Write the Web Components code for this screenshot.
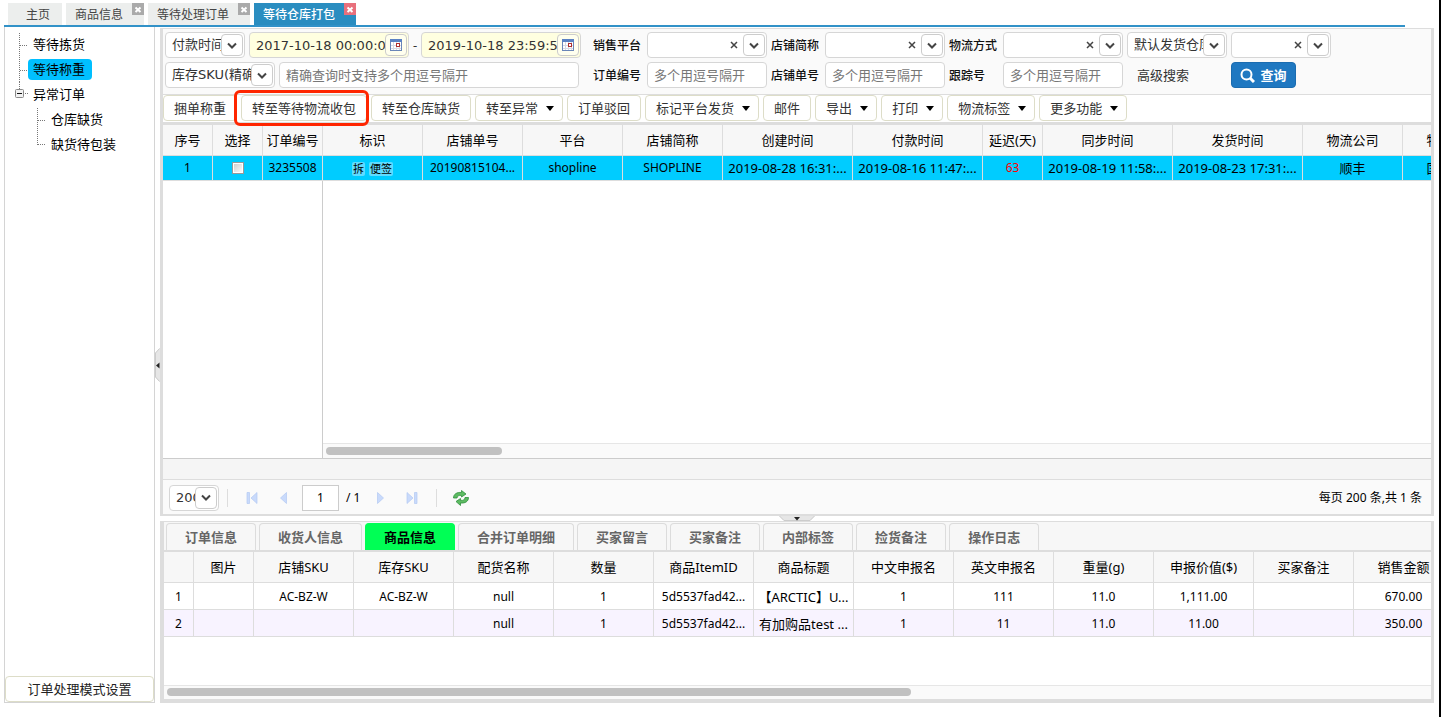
<!DOCTYPE html>
<html lang="zh-CN">
<head>
<meta charset="utf-8">
<title>等待仓库打包</title>
<style>
  html, body { margin: 0; height: 100%; }
  body {
    --line: #dddddd;
    --ui: "DejaVu Sans", "Noto Sans CJK SC", sans-serif;
    font: 13px/20px "Noto Sans", "Noto Sans CJK SC", sans-serif;
    color: #000;
    background: #fff;
  }
</style>
</head>
<body>
<app-shell>
  <tab-bar slot="tabs">
    <tab-item>主页</tab-item>
    <tab-item closable>商品信息</tab-item>
    <tab-item closable>等待处理订单</tab-item>
    <tab-item closable active>等待仓库打包</tab-item>
  </tab-bar>
  <side-tree slot="side"></side-tree>
  <search-form slot="main"></search-form>
  <tool-bar slot="main">
    <tool-button>捆单称重</tool-button>
    <tool-button marked>转至等待物流收包</tool-button>
    <tool-button>转至仓库缺货</tool-button>
    <tool-button menu>转至异常</tool-button>
    <tool-button>订单驳回</tool-button>
    <tool-button menu>标记平台发货</tool-button>
    <tool-button>邮件</tool-button>
    <tool-button menu>导出</tool-button>
    <tool-button menu>打印</tool-button>
    <tool-button menu>物流标签</tool-button>
    <tool-button menu>更多功能</tool-button>
  </tool-bar>
  <order-grid slot="main"></order-grid>
  <page-bar slot="main"></page-bar>
  <detail-panel slot="detail"></detail-panel>
</app-shell>

<script>
const define = (name, css, html) => {
  const tpl = document.createElement('template');
  const base = '*{box-sizing:border-box}button,input,select{font:inherit;color:inherit;margin:0}';
  customElements.define(name, class extends HTMLElement {
    constructor() {
      super();
      const markup = typeof html === 'function' ? html(this) : html;
      tpl.innerHTML = `<style>${base}${css}</style>${markup}`;
      this.attachShadow({ mode: 'open' }).append(tpl.content.cloneNode(true));
    }
  });
};

/* ---- frame ---- */
define('app-shell', `
  :host{display:flex;flex-direction:column;height:100vh;min-height:560px;padding:3px 0 14px 4px;border-right:2px solid #000;box-sizing:border-box;overflow:hidden}
  .body{flex:1;display:flex;min-height:0;padding-right:5px}
  aside{flex:none;width:151px;border:1px solid #d4d4d4;border-top:0;display:flex}
  .vsplit,.hsplit{flex:none;display:flex;align-items:center;justify-content:center}
  .vsplit{width:5px}
  .hsplit{height:5px}
  .split{display:block;border:0;padding:0;background:none;line-height:0}
  main{flex:1;min-width:0;display:flex;flex-direction:column;padding-top:1px}
  .upper{flex:1;min-height:0;display:flex;flex-direction:column;border:3px solid var(--line);border-top-width:1px;border-bottom-width:2px}
  .lower{flex:none;border:3px solid var(--line);border-left-width:4px;border-top-width:1px;border-bottom-width:4px}
`, `
  <slot name="tabs"></slot>
  <div class="body">
    <aside><slot name="side"></slot></aside>
    <div class="vsplit"><button class="split" aria-label="收起左侧"><svg width="5" height="34"><path d="M5 0 0 5v24l5 5z" fill="#e6e6e6"/><path d="M4.500 .5.5 5v24l4 4.500" fill="none" stroke="#ccc"/><path d="M4.500 14.500v6L1 17.500z" fill="#222"/></svg></button></div>
    <main>
      <div class="upper"><slot name="main"></slot></div>
      <div class="hsplit"><button class="split" aria-label="收起下方"><svg width="36" height="5"><path d="M0 0h36l-5 5H5z" fill="#e6e6e6"/><path d="M.5 0 5 4.500h26L35.500 0" fill="none" stroke="#ccc"/><path d="M15 1h6l-3 3.500z" fill="#222"/></svg></button></div>
      <div class="lower"><slot name="detail"></slot></div>
    </main>
  </div>
`);

define('tab-bar', `
  :host{display:flex;gap:4px;height:24px;flex:none;padding-left:4px;margin-right:34px;border-bottom:2px solid #3292c8;box-sizing:border-box}
`, `<slot></slot>`);

define('tab-item', `
  :host{display:flex;height:22px;position:relative;font-size:12px;line-height:24px}
  .t{border:0;padding:0 12px 0 18px;background:#eceeed;color:#444;height:22px;line-height:24px;white-space:nowrap}
  :host([closable]) .t{padding:0 21px 0 9px}
  :host([active]) .t{background:#2a8dc0;color:#fff;font-weight:500}
  .x{display:none;position:absolute;right:0;top:0;width:12px;height:12px;border:0;padding:0;background:#aaa;line-height:0}
  :host([closable]) .x{display:block}
  :host([active]) .x{background:#e8707c}
`, `<button class="t"><slot></slot></button><button class="x" aria-label="关闭"><svg width="12" height="12"><path d="M3.500 4.500 8.500 9M8.500 4.500 3.500 9" stroke="#fff" stroke-width="2"/></svg></button>`);

/* ---- sidebar ---- */
const dots = 'fill="none" stroke="#777" stroke-dasharray="1 1"';
define('side-tree', `
  :host{flex:1;display:flex;flex-direction:column;padding-top:5px}
  ul{list-style:none;margin:0;padding:0;flex:1}
  li{display:flex;height:25px;align-items:center}
  svg{flex:none}
  a{color:#000;text-decoration:none;line-height:21px;padding:0 7px 0 5px;border-radius:4px}
  a[aria-current]{background:#00bfff}
  .set{height:26px;border:1px solid #ddddc8;border-radius:4px;background:#fff;color:#222;line-height:20px;padding:0}
`, `
  <ul>
    <li><svg width="23" height="25"><path d="M14.500 1v24M15 13.500h8" ${dots}/></svg><a href="#">等待拣货</a></li>
    <li><svg width="23" height="25"><path d="M14.500 0v25M15 13.500h8" ${dots}/></svg><a href="#" aria-current="page">等待称重</a></li>
    <li><svg width="23" height="25"><path d="M14.500 0v7M20 11.500h3" ${dots}/><rect x="10.500" y="7.500" width="8" height="8" rx="1" fill="#f2f2f2" stroke="#8a8a8a"/><path d="M12 11.500h5" stroke="#111"/></svg><a href="#">异常订单</a></li>
    <li><svg width="41" height="25"><path d="M32.500 1v24M33 13.500h8" ${dots}/></svg><a href="#">仓库缺货</a></li>
    <li><svg width="41" height="25"><path d="M32.500 0v13M33 12.500h8" ${dots}/></svg><a href="#">缺货待包装</a></li>
  </ul>
  <button class="set">订单处理模式设置</button>
`);

/* ---- search form ---- */
const chevron = `<span class="arrow" aria-hidden="true"><svg width="10" height="7"><path d="M1 1.500 5 5.500 9 1.500" fill="none" stroke="#444" stroke-width="2"/></svg></span>`;
const calendar = `<svg width="12" height="12"><rect x=".5" y=".5" width="11" height="11" fill="#fff" stroke="#6a86b8"/><path d="M0 0h12v3H0z" fill="#5b82c4"/><path d="M1 6.500h10M1 9.500h10M3.500 3v8M6.500 3v8M9.500 3v8" stroke="#d5d9e4"/><rect x="6.500" y="4.500" width="3" height="3" fill="#fff" stroke="#b03030"/></svg>`;
const fieldCss = `
  :host{display:flex;align-items:center;font-family:var(--ui);color:#333}
  label{flex:none;width:54px;font:500 12px/20px "Noto Sans CJK SC",sans-serif;color:#111}
  .box{position:relative;width:var(--w,120px);height:26px;border:1px solid #d6d6d6;border-radius:4px;background:#fff;display:flex}
  select,input{appearance:none;flex:1;min-width:0;width:100%;height:24px;border:0;border-radius:4px;background:transparent;padding:0 6px;outline:0;line-height:20px;text-overflow:clip}
  input::placeholder{color:#777;opacity:1}
  .arrow,.cal{position:absolute;right:1px;top:1px;width:22px;height:22px;border:1px solid #ccc;border-radius:4px;background:#fff;display:flex;align-items:center;justify-content:center;pointer-events:none;padding:0}
  .clear{position:absolute;right:25px;top:2px;width:14px;height:20px;border:0;padding:0;background:none;display:flex;align-items:center;justify-content:center}
  .date{background:#ffffe0}.cal{background:#ffffee;pointer-events:auto}
`;
const labelOf = h => h.getAttribute('label') ? `<label for="c">${h.getAttribute('label')}</label>` : '';
const aria = h => h.getAttribute('name') ? `aria-label="${h.getAttribute('name')}"` : '';

define('combo-field', fieldCss, h => `${labelOf(h)}<div class="box"><select id="c" ${aria(h)}><option>${h.getAttribute('value') || ''}</option></select>${h.hasAttribute('clear') ? '<button class="clear" type="button" aria-label="清除"><svg width="8" height="8"><path d="M1 1l6 6M7 1 1 7" stroke="#444" stroke-width="1.500"/></svg></button>' : ''}${chevron}</div>`);
define('text-field', fieldCss, h => `${labelOf(h)}<div class="box"><input id="c" type="text" ${aria(h)} placeholder="${h.getAttribute('hint') || ''}"></div>`);
define('date-field', fieldCss, h => `<div class="box date"><input type="text" ${aria(h)} value="${h.getAttribute('value')}"><button class="cal" type="button" aria-label="选择日期">${calendar}</button></div>`);

define('search-form', `
  :host{flex:none;display:block;background:#fafafa;padding:3px 2px 6px}
  form{display:flex;flex-direction:column;gap:4px}
  .row{display:flex;gap:4px;height:26px;align-items:center}
  .row>*{flex:none}
  .dash{width:4px;color:#333;line-height:20px}
  .w80{--w:80px}.w100{--w:100px}.w110{--w:110px}.w160{--w:160px}.w300{--w:300px}
  .first{margin-left:8px}.wide{margin-left:10px}
  .adv{width:90px;margin-left:10px;color:#333;text-decoration:none}
  .go{width:65px;height:26px;border:1px solid #1b6cb0;border-radius:4px;background:#1f78c1;color:#fff;font-weight:700;display:flex;align-items:center;justify-content:center;gap:5px;padding:0}
`, `
  <form onsubmit="return false">
    <div class="row">
      <combo-field class="w80" name="时间类型" value="付款时间"></combo-field>
      <date-field class="w160" name="开始时间" value="2017-10-18 00:00:00"></date-field>
      <span class="dash">-</span>
      <date-field class="w160" name="结束时间" value="2019-10-18 23:59:59"></date-field>
      <combo-field class="first" label="销售平台" clear></combo-field>
      <combo-field label="店铺简称" clear></combo-field>
      <combo-field label="物流方式" clear></combo-field>
      <combo-field class="w100" name="仓库类型" value="默认发货仓库"></combo-field>
      <combo-field class="w100" name="仓库" clear></combo-field>
    </div>
    <div class="row">
      <combo-field class="w110" name="查询类型" value="库存SKU(精确)"></combo-field>
      <text-field class="w300" name="查询内容" hint="精确查询时支持多个用逗号隔开"></text-field>
      <text-field class="wide" label="订单编号" hint="多个用逗号隔开"></text-field>
      <text-field label="店铺单号" hint="多个用逗号隔开"></text-field>
      <text-field label="跟踪号" hint="多个用逗号隔开"></text-field>
      <a class="adv" href="#">高级搜索</a>
      <button class="go"><svg width="15" height="15"><circle cx="6.500" cy="6.500" r="5" fill="none" stroke="#fff" stroke-width="2"/><path d="M10 10l4 4" stroke="#fff" stroke-width="3"/></svg>查询</button>
    </div>
  </form>
`);

/* ---- toolbar ---- */
define('tool-bar', `
  :host{flex:none;display:flex;gap:4px;height:31px;border-top:1px solid var(--line);border-bottom:3px solid var(--line);box-sizing:border-box}
`, `<slot></slot>`);
define('tool-button', `
  :host{display:block;position:relative}
  button{height:26px;border:1px solid #ddddc8;border-radius:4px;background:#fff;color:#333;padding:0 10px;line-height:20px;white-space:nowrap;display:flex;align-items:center}
  svg{display:none;margin:0 -2px 0 8px}
  :host([menu]) svg{display:block}
  .mark{display:none;position:absolute;inset:-5px -2px -4px -7px;border:3px solid #ff2600;border-radius:6px;pointer-events:none}
  :host([marked]) .mark{display:block}
`, `<button><slot></slot><svg width="8" height="5"><path d="M0 0h8L4 5z" fill="#000"/></svg></button><span class="mark"></span>`);

/* ---- data tables ---- */
const tableCss = `
  table{table-layout:fixed;border-collapse:separate;border-spacing:0;width:0}
  th,td{padding:0;text-align:center;font-weight:400;white-space:nowrap;overflow:hidden;border:0 solid var(--line);border-width:0 1px 1px 0}
  th{height:31px;background:#f7f7f7}
  td{font-size:12px}
  td.zh{font-size:13px}
  .track{flex:none;height:15px;border-top:1px solid #e6e6e6;background:#fafafa;padding:3px}
  .thumb{height:8px;border-radius:4px;background:#c1c1c1}
`;
const cols = ws => `<colgroup>${ws.map(w => `<col style="width:${w}px">`).join('')}</colgroup>`;
const cell = v => `<td${/[\u4e00-\u9fff\u3010]|:/.test(v) && !v.includes('<') ? ' class="zh"' : ''}>${v}</td>`;
const makeTable = (ws, heads, rows) =>
  `<table>${cols(ws)}<thead><tr>${heads.map(t => `<th scope="col">${t}</th>`).join('')}</tr></thead><tbody>${rows.map(r => `<tr>${r.map(cell).join('')}</tr>`).join('')}</tbody></table>`;

define('order-grid', `
  :host{flex:1;min-height:0;display:flex;flex-direction:column;overflow:hidden;background:#fff}
  ${tableCss}
  td{height:25px;background:#00ccff}
  .late{color:#f00}
  .tag{display:inline-block;font-size:11px;line-height:14px;height:14px;padding:0 1px;border-radius:2px;background:#5fdcff;margin:0 2px;vertical-align:middle}
  input{appearance:none;display:block;width:12px;height:12px;border:1px solid #999;background:linear-gradient(135deg,#ccc,#fff);box-shadow:inset 0 0 0 1px #fff;margin:0 auto}
  .rest{flex:1;display:flex;min-height:0}
  .frozen{flex:none;width:160px;border-right:1px solid #ccc}
  .free{flex:1;display:flex;flex-direction:column;justify-content:flex-end}
  .thumb{width:16%}
  .foot{flex:none;height:22px;background:#f5f5f5;border:0 solid #ccc;border-top-width:1px;border-bottom:1px solid var(--line)}
`, makeTable(
    [50, 50, 60, 100, 100, 100, 100, 130, 130, 60, 130, 130, 100, 100],
    ['序号', '选择', '订单编号', '标识', '店铺单号', '平台', '店铺简称', '创建时间', '付款时间', '延迟(天)', '同步时间', '发货时间', '物流公司', '物流渠道'],
    [['1', '<input type="checkbox" aria-label="选择订单">', '3235508', '<span class="tag">拆</span><span class="tag">便签</span>', '20190815104...', 'shopline', 'SHOPLINE', '2019-08-28 16:31:...', '2019-08-16 11:47:...', '<span class="late">63</span>', '2019-08-19 11:58:...', '2019-08-23 17:31:...', '顺丰', '国内快递']]
  ) + `
  <div class="rest"><div class="frozen"></div><div class="free"><div class="track"><div class="thumb"></div></div></div></div>
  <div class="foot"></div>
`);

/* ---- pager ---- */
define('page-bar', `
  :host{flex:none;display:flex;align-items:center;height:34px;padding:1px 9px 0 6px;box-sizing:border-box;background:#fafafa;font-size:12px;overflow:hidden}
  combo-field{--w:50px;font-size:13px}
  button{border:0;background:none;padding:0;width:16px;height:16px;line-height:0}
  i{width:1px;height:18px;background:var(--line);margin:0 16px 0 8px}
  .p{margin-right:16px}
  .p.near{margin-right:10px}
  input{width:37px;height:26px;border:1px solid #ccc;background:#fff;text-align:center;padding:0}
  .of{width:33px;padding-left:7px;white-space:nowrap}
  .e{margin:0 16px}
  .e+i{margin-left:0}
  .sum{margin-left:auto;white-space:nowrap}
`, `
  <combo-field name="每页条数" value="200"></combo-field><i></i>
  <button class="p" aria-label="首页"><svg width="16" height="16"><path d="M3 2.500h2.500v11H3zM13 2.500v11L7 8z" fill="#c9dafb" stroke="#b3c8f2" stroke-width=".7"/></svg></button>
  <button class="p near" aria-label="上一页"><svg width="16" height="16"><path d="M10.500 2.500v11L4.500 8z" fill="#c9dafb" stroke="#b3c8f2" stroke-width=".7"/></svg></button>
  <input type="text" value="1" aria-label="页码"><span class="of">/ 1</span>
  <button aria-label="下一页"><svg width="16" height="16"><path d="M5.500 2.500v11l6-5.500z" fill="#c9dafb" stroke="#b3c8f2" stroke-width=".7"/></svg></button>
  <button class="e" aria-label="末页"><svg width="16" height="16"><path d="M10.500 2.500H13v11h-2.500zM3 2.500v11L9 8z" fill="#c9dafb" stroke="#b3c8f2" stroke-width=".7"/></svg></button>
  <i></i>
  <button aria-label="刷新"><svg width="16" height="16"><g fill="#5dbb62" stroke="#2f8f3c" stroke-width=".8"><path d="M.5 8C.5 4 4 2 8.500 2.500V.5L13 4 8.500 7V5.500C5.500 5 4.500 6 4 8z"/><path d="M15.500 7.500c0 4-3.500 6-8 5.500v2.500L3 11.500l4.500-3v1.800c3 .4 4.300-.4 4.500-2.800z"/></g></svg></button>
  <span class="sum">每页 200 条,共 1 条</span>
`);

/* ---- detail ---- */
define('detail-panel', `
  :host{display:flex;flex-direction:column;height:177px;overflow:hidden}
  ${tableCss}
  nav{flex:none;display:flex;gap:3px;height:30px;padding:1px 0 0 2px;background:#f7f7f7;border-bottom:2px solid var(--line)}
  nav button{height:27px;border:1px solid #dcdcdc;border-bottom:0;border-radius:4px 4px 0 0;background:#f7f7f7;color:#666;font-weight:700;padding:0 18px;line-height:20px;white-space:nowrap}
  nav button[aria-selected]{background:#00ff55;border-color:#00ff55;color:#000}
  td{height:27px;padding-top:2px}
  tr:nth-child(2) td{background:#f8f3ff}
  .fill{flex:1}
  .track{height:14px;padding-top:2px}
  .thumb{width:59%}
`, `
  <nav role="tablist">${['订单信息', '收货人信息', '商品信息', '合并订单明细', '买家留言', '买家备注', '内部标签', '捡货备注', '操作日志'].map((t, i) => `<button role="tab"${i === 2 ? ' aria-selected="true"' : ''}>${t}</button>`).join('')}</nav>
` + makeTable(
    [30, 60, 100, 100, 100, 100, 100, 100, 100, 100, 100, 100, 100, 100],
    ['', '图片', '店铺SKU', '库存SKU', '配货名称', '数量', '商品ItemID', '商品标题', '中文申报名', '英文申报名', '重量(g)', '申报价值($)', '买家备注', '销售金额'],
    [['1', '', 'AC-BZ-W', 'AC-BZ-W', 'null', '1', '5d5537fad42...', '【ARCTIC】U...', '1', '111', '11.0', '1,111.00', '', '670.00'],
     ['2', '', '', '', 'null', '1', '5d5537fad42...', '有加购品test ...', '1', '11', '11.0', '11.00', '', '350.00']]
  ) + `
  <div class="fill"></div>
  <div class="track"><div class="thumb"></div></div>
`);
</script>
</body>
</html>
